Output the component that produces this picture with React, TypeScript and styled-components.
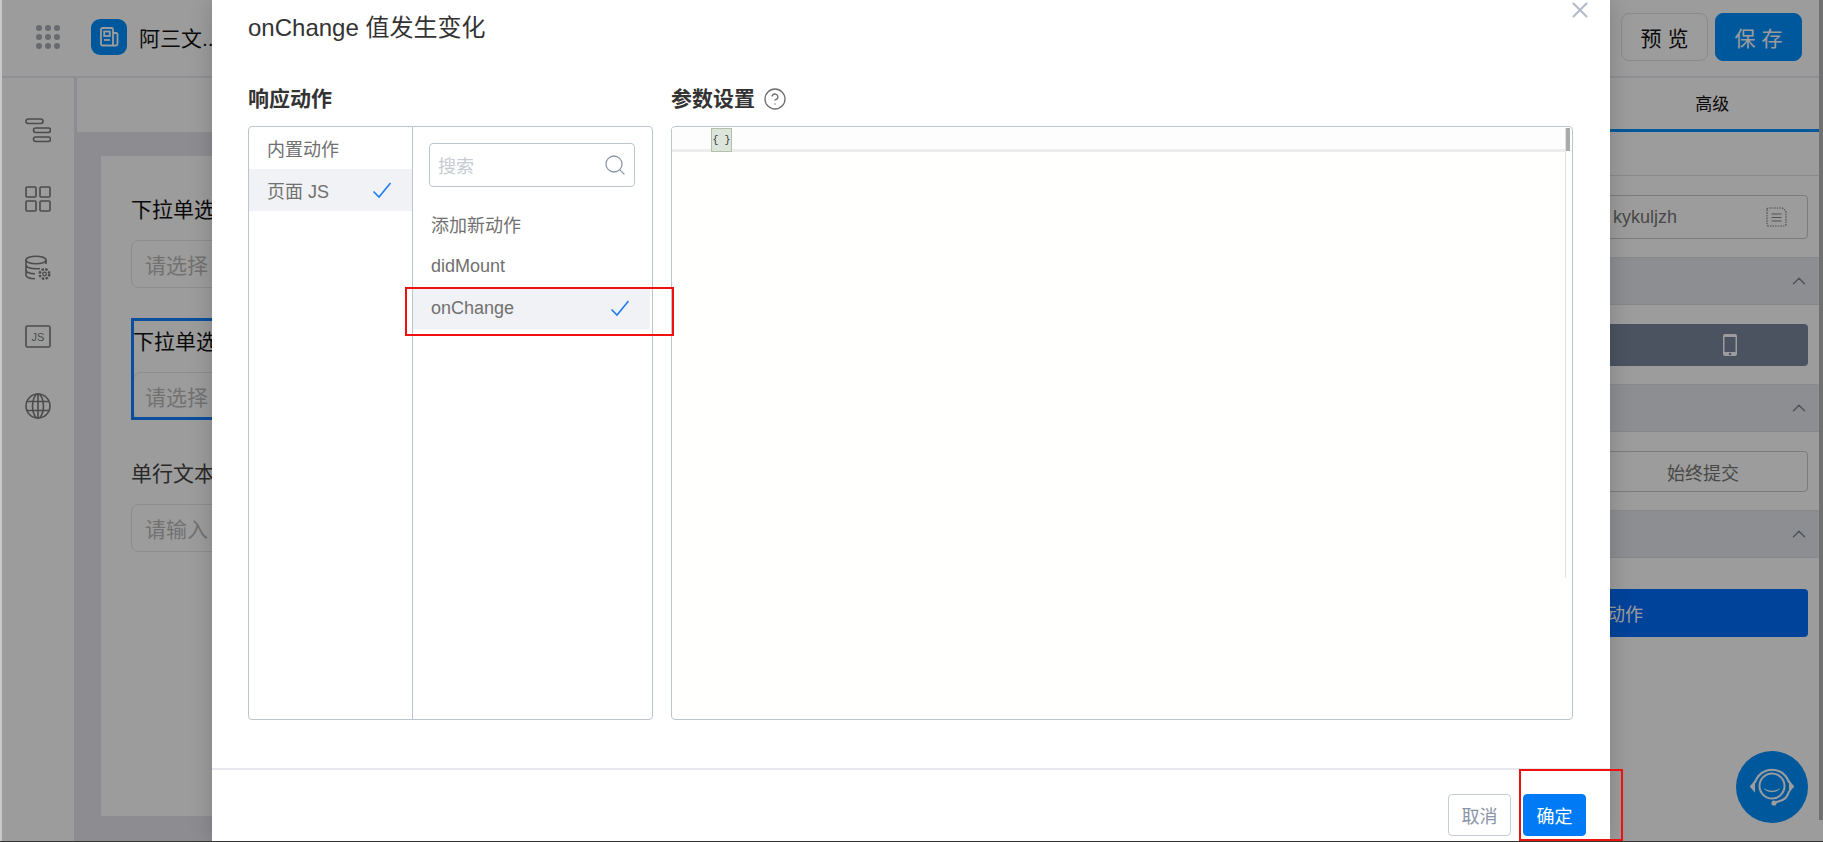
import { FC } from "react";
import styled, { createGlobalStyle } from "styled-components";
import { ChevronUp, Search, X, CircleHelp } from "lucide-react";

const Global = createGlobalStyle`
  html, body {
    margin: 0;
    padding: 0;
    background: #c8c8c8;
    overflow: hidden;
  }
  * { box-sizing: border-box; }
  body {
    font-family: "Liberation Sans", "Noto Sans CJK SC", sans-serif;
    color: #222;
  }
`;

const Screen = styled.div`
  height: 842px;
  padding-left: 2px;
  border-bottom: 1px solid #333;
`;

const Page = styled.div`
  position: relative;
  height: 841px;
  display: flex;
  background: #fff;
  overflow: hidden;
`;

const Shell = styled.div`
  flex: 1;
  min-width: 0;
  display: flex;
  flex-direction: column;
`;

const PageScroll = styled.div`
  width: 4px;
  height: 820px;
  background: #b8b8b8;
`;

const Backdrop = styled.div`
  position: absolute;
  inset: 0;
  background: rgba(0, 0, 0, 0.39);
`;

const TopBar = styled.header`
  height: 78px;
  flex: none;
  display: flex;
  align-items: center;
  padding: 0 17px 3px 34px;
  border-bottom: 2px solid #ebebf2;
`;

const Grip = styled.div`
  display: grid;
  grid-template-columns: repeat(3, 6px);
  gap: 3px;
  margin-right: 31px;
  span {
    width: 6px;
    height: 6px;
    border-radius: 50%;
    background: #a9aeb5;
  }
`;

const Logo = styled.div`
  width: 36px;
  height: 36px;
  border-radius: 9px;
  background: #0090ff;
  display: flex;
  align-items: center;
  justify-content: center;
  margin-right: 12px;
`;

const AppName = styled.div`
  font-size: 21px;
  color: #111;
  white-space: nowrap;
`;

const TopActions = styled.div`
  margin-left: auto;
  display: flex;
  gap: 7px;
`;

const TopButton = styled.button<{ $primary?: boolean }>`
  width: 87px;
  height: 48px;
  border-radius: 8px;
  font: inherit;
  font-size: 21px;
  letter-spacing: 6px;
  padding: 0 0 0 6px;
  color: ${(p) => (p.$primary ? "#fff" : "#111")};
  background: ${(p) => (p.$primary ? "#0090ff" : "#fff")};
  border: 1px solid ${(p) => (p.$primary ? "#0090ff" : "#e2e2e6")};
`;

const Workspace = styled.div`
  flex: 1;
  min-height: 0;
  display: flex;
`;

const Sidebar = styled.nav`
  width: 72px;
  flex: none;
  display: flex;
  flex-direction: column;
  align-items: center;
  gap: 43px;
  padding-top: 39px;
`;

const SideIcon = styled.svg`
  width: 26px;
  height: 26px;
  display: block;
  fill: none;
  stroke: #7c7c7c;
  stroke-width: 1.6;
`;

const Stage = styled.main`
  flex: 1;
  min-width: 0;
  display: flex;
  flex-direction: column;
  background: #e6e7ee;
`;

const SubBar = styled.div`
  height: 54px;
  margin-left: 3px;
  background: #fff;
`;

const CanvasArea = styled.div`
  flex: 1;
  padding: 24px 27px 25px 27px;
`;

const FormCard = styled.div`
  height: 100%;
  background: #fff;
  padding: 42px 30px;
`;

const Field = styled.div<{ $selected?: boolean }>`
  display: flex;
  flex-direction: column;
  gap: 18px;
  ${(p) =>
    p.$selected &&
    `
    outline: 3px solid #1580ff;
    outline-offset: -3px;
    margin: 30px 0 42px;
    padding: 12px 0 0 2px;
    height: 102px;
  `}
`;

const FieldLabel = styled.label<{ $muted?: boolean }>`
  font-size: 21px;
  line-height: 24px;
  white-space: nowrap;
  color: ${(p) => (p.$muted ? "#444" : "#111")};
`;

const FakeInput = styled.div<{ $selected?: boolean }>`
  height: 48px;
  display: flex;
  align-items: center;
  padding-left: ${(p) => (p.$selected ? 11 : 13)}px;
  border: 1px solid #e4e6ea;
  border-radius: 8px;
  font-size: 21px;
  color: #bbb;
`;

const Inspector = styled.aside`
  width: 427px;
  flex: none;
  display: flex;
  flex-direction: column;
`;

const Tabs = styled.div`
  height: 54px;
  flex: none;
  display: grid;
  grid-template-columns: 1fr 1fr;
  border-bottom: 3px solid #0090ff;
`;

const Tab = styled.div`
  display: flex;
  align-items: center;
  justify-content: center;
  padding-bottom: 2px;
  font-size: 17px;
  color: #111;
`;

const Block = styled.div`
  padding: 19px 11px 18px 14px;
  border-bottom: 1px solid #e2e2e6;
`;

const BlankBlock = styled.div`
  height: 44px;
  border-bottom: 1px solid #e2e2e6;
`;

const SectionHead = styled.div`
  height: 47px;
  flex: none;
  display: flex;
  align-items: center;
  justify-content: flex-end;
  padding-right: 9px;
  background: #e7e9ef;
  border-bottom: 1px solid #dcdde3;
  color: #7d8797;
`;

const NameInput = styled.div`
  height: 44px;
  display: flex;
  align-items: center;
  justify-content: flex-end;
  padding-right: 20px;
  gap: 88px;
  border: 1px solid #c5c9d0;
  border-radius: 4px;
  font-size: 18px;
  color: #777;
`;

const DeviceSwitch = styled.div`
  height: 42px;
  display: flex;
  align-items: center;
  justify-content: flex-end;
  padding-right: 71px;
  border-radius: 4px;
  background: #7b889f;
`;

const SubmitSwitch = styled.div`
  height: 41px;
  display: grid;
  grid-template-columns: 192px 1fr;
  align-items: center;
  border: 1px solid #c5c9d0;
  border-radius: 4px;
  font-size: 18px;
  color: #777;
  span:last-child {
    text-align: center;
  }
`;

const ActionWrap = styled.div`
  padding: 31px 11px 0 14px;
`;

const ActionButton = styled.div`
  height: 48px;
  display: flex;
  align-items: center;
  justify-content: flex-end;
  padding-right: 165px;
  border-radius: 4px;
  background: #006efe;
  font-size: 18px;
  color: #fff;
`;

const SupportBubble = styled.div`
  position: absolute;
  left: 1734px;
  top: 751px;
  width: 72px;
  height: 72px;
  border-radius: 50%;
  background: #0090ff;
  display: flex;
  align-items: center;
  justify-content: center;
`;

const Modal = styled.section`
  position: absolute;
  left: 210px;
  top: 0;
  bottom: 0;
  width: 1398px;
  display: flex;
  flex-direction: column;
  background: #fff;
  box-shadow: 0 0 22px rgba(0, 0, 0, 0.18);
`;

const CloseButton = styled.div`
  position: absolute;
  right: 17px;
  top: -3px;
  color: #b5bdcb;
  line-height: 0;
`;

const ModalTitle = styled.h2`
  margin: 0;
  padding: 14px 36px 0;
  height: 85px;
  font-size: 24px;
  line-height: 28px;
  font-weight: 400;
  color: #333;
`;

const ModalBody = styled.div`
  flex: 1;
  min-height: 0;
  display: grid;
  grid-template-columns: 405px 902px;
  gap: 18px;
  padding: 0 37px 0 36px;
`;

const Column = styled.div`
  display: flex;
  flex-direction: column;
  height: 635px;
`;

const ColumnTitle = styled.div`
  height: 41px;
  flex: none;
  display: flex;
  align-items: flex-start;
  gap: 8px;
  font-size: 21px;
  line-height: 28px;
  font-weight: 700;
  color: #333;
  svg {
    margin-top: 2px;
    color: #6e6e6e;
  }
`;

const ActionPanel = styled.div`
  flex: 1;
  display: flex;
  border: 1px solid #bcc4d0;
  border-radius: 4px;
  overflow: hidden;
`;

const TypeList = styled.div`
  width: 164px;
  flex: none;
  border-right: 1px solid #bcc4d0;
`;

const ActionList = styled.div`
  flex: 1;
  min-width: 0;
  padding: 16px 2px 0 0;
`;

const ListItem = styled.div<{ $active?: boolean }>`
  height: 42px;
  display: flex;
  align-items: center;
  justify-content: space-between;
  padding: 0 20px 0 18px;
  font-size: 18px;
  color: #707070;
  background: ${(p) => (p.$active ? "#f1f2f5" : "transparent")};
`;

const CheckMark = styled.svg`
  width: 20px;
  height: 18px;
  fill: none;
  stroke: #1f7cf2;
  stroke-width: 1.6;
`;

const SearchBox = styled.div`
  width: 206px;
  height: 44px;
  margin: 0 0 16px 16px;
  display: flex;
  align-items: center;
  justify-content: space-between;
  padding: 0 7px 0 8px;
  border: 1px solid #bcc4d0;
  border-radius: 4px;
  font-size: 18px;
  color: #c6cad2;
  svg {
    color: #8d99a8;
  }
`;

const EditorPanel = styled.div`
  flex: 1;
  display: flex;
  padding: 1px 2px 0 0;
  border: 1px solid #bcc4d0;
  border-radius: 4px;
  background: #fffffd;
`;

const CodeArea = styled.div`
  flex: 1;
  min-width: 0;
`;

const ActiveLine = styled.div`
  height: 24px;
  padding-left: 39px;
  background: #fdfdfd;
  border-bottom: 3px solid #ececec;
`;

const Bracket = styled.span`
  display: inline-flex;
  align-items: center;
  justify-content: center;
  width: 21px;
  height: 24px;
  background: #dbe5da;
  border: 1px solid #b3c0b0;
  font-family: "Liberation Mono", monospace;
  font-size: 10px;
  white-space: nowrap;
  color: #333;
`;

const ScrollRail = styled.div`
  width: 5px;
  height: 450px;
  border-left: 1px solid #e2e2e2;
  flex: none;
`;

const ScrollThumb = styled.div`
  width: 4px;
  height: 23px;
  background: #aaa;
`;

const ModalFooter = styled.footer`
  height: 73px;
  flex: none;
  display: flex;
  justify-content: flex-end;
  gap: 12px;
  padding: 24px 24px 0 0;
  border-top: 2px solid #e6e8ee;
`;

const FooterButton = styled.button<{ $primary?: boolean }>`
  width: 63px;
  height: 42px;
  padding: 0;
  border-radius: 4px;
  font: inherit;
  font-size: 18px;
  color: ${(p) => (p.$primary ? "#fff" : "#8a94a6")};
  background: ${(p) => (p.$primary ? "#007bf5" : "#fff")};
  border: 1px solid ${(p) => (p.$primary ? "#007bf5" : "#c5ccd8")};
`;

const Callout = styled.div<{ $x: number; $y: number; $w: number; $h: number }>`
  position: absolute;
  left: ${(p) => p.$x}px;
  top: ${(p) => p.$y}px;
  width: ${(p) => p.$w}px;
  height: ${(p) => p.$h}px;
  border: 2px solid #f01010;
  pointer-events: none;
`;

const Tick: FC = () => (
  <CheckMark viewBox="0 0 20 18">
    <path d="M1.5 10.5 L7 16 L18.5 2" />
  </CheckMark>
);

const TreeIcon = () => (
  <SideIcon viewBox="0 0 26 26">
    <rect x="1" y="2" width="17" height="4.5" rx="2.2" />
    <rect x="8.5" y="11" width="17" height="4.5" rx="2.2" />
    <rect x="8.5" y="20" width="17" height="4.5" rx="2.2" />
  </SideIcon>
);

const GridIcon = () => (
  <SideIcon viewBox="0 0 26 26">
    <rect x="1" y="1" width="10" height="10" rx="1" />
    <rect x="15" y="1" width="10" height="10" rx="1" />
    <rect x="1" y="15" width="10" height="10" rx="1" />
    <rect x="15" y="15" width="10" height="10" rx="1" />
  </SideIcon>
);

const DataIcon = () => (
  <SideIcon viewBox="0 0 26 26">
    <ellipse cx="11" cy="5" rx="10" ry="3.8" />
    <path d="M1 5v15c0 2.2 4 3.6 9 3.8M21 5v4M1 10c0 2.2 4.5 3.8 10 3.8 1.5 0 2.8-.1 4-.3M1 15c0 2.2 4 3.6 9 3.8" />
    <circle cx="19.5" cy="19" r="1.8" strokeWidth="1.3" />
    <circle cx="19.5" cy="19" r="4.8" strokeDasharray="2.4 1.4" strokeWidth="2.4" />
  </SideIcon>
);

const JsIcon = () => (
  <SideIcon viewBox="0 0 26 26">
    <rect x="1" y="2" width="24" height="21" rx="1.5" />
    <text x="13" y="17" textAnchor="middle" fontSize="11" fontFamily="Liberation Sans" fill="#7c7c7c" stroke="none">
      JS
    </text>
  </SideIcon>
);

const GlobeIcon = () => (
  <SideIcon viewBox="0 0 26 26">
    <circle cx="13" cy="13" r="12" />
    <ellipse cx="13" cy="13" rx="5.5" ry="12" />
    <path d="M13 1v24M2 8.5h22M2 17.5h22" />
  </SideIcon>
);

const App: FC = () => (
  <Screen>
    <Global />
    <Page>
      <Shell>
        <TopBar>
          <Grip>
            {Array.from({ length: 9 }, (_, i) => (
              <span key={i} />
            ))}
          </Grip>
          <Logo>
            <svg width="22" height="22" viewBox="0 0 22 22" fill="none" stroke="#fff" strokeWidth="1.8">
              <path d="M3 3.5a1.5 1.5 0 0 1 1.5-1.5h9A1.5 1.5 0 0 1 15 3.5V19.5H4.5A1.5 1.5 0 0 1 3 18z" />
              <path d="M15 7h3a1.5 1.5 0 0 1 1.5 1.5V18a1.5 1.5 0 0 1-1.5 1.5h-3" />
              <rect x="6.2" y="5.5" width="5.6" height="4.5" />
              <path d="M6 14h6" />
            </svg>
          </Logo>
          <AppName>阿三文...</AppName>
          <TopActions>
            <TopButton>预览</TopButton>
            <TopButton $primary>保存</TopButton>
          </TopActions>
        </TopBar>
        <Workspace>
          <Sidebar>
            <TreeIcon />
            <GridIcon />
            <DataIcon />
            <JsIcon />
            <GlobeIcon />
          </Sidebar>
          <Stage>
            <SubBar />
            <CanvasArea>
              <FormCard>
                <Field>
                  <FieldLabel>下拉单选</FieldLabel>
                  <FakeInput>请选择</FakeInput>
                </Field>
                <Field $selected>
                  <FieldLabel>下拉单选</FieldLabel>
                  <FakeInput $selected>请选择</FakeInput>
                </Field>
                <Field>
                  <FieldLabel $muted>单行文本</FieldLabel>
                  <FakeInput>请输入</FakeInput>
                </Field>
              </FormCard>
            </CanvasArea>
          </Stage>
          <Inspector>
            <Tabs>
              <Tab />
              <Tab>高级</Tab>
            </Tabs>
            <BlankBlock />
            <Block>
              <NameInput>
                kykuljzh
                <svg width="22" height="22" viewBox="0 0 22 22" fill="none" stroke="#8a8a8a" strokeWidth="1.2">
                  <path d="M2 3.5A1.5 1.5 0 0 1 3.5 2h14L21 5v13.5a1.5 1.5 0 0 1-1.5 1.5h-16A1.5 1.5 0 0 1 2 18.5z" strokeDasharray="1.6 1" />
                  <path d="M6.5 8h10M6.5 11.5h10M6.5 15h10" />
                </svg>
              </NameInput>
            </Block>
            <SectionHead>
              <ChevronUp size={22} strokeWidth={1.6} />
            </SectionHead>
            <Block>
              <DeviceSwitch>
                <svg width="14" height="22" viewBox="0 0 14 22" fill="#fff">
                  <path fillRule="evenodd" d="M2 0h10a2 2 0 0 1 2 2v18a2 2 0 0 1-2 2H2a2 2 0 0 1-2-2V2a2 2 0 0 1 2-2zm-.5 3v15h11V3zM7 18.8a1.2 1.2 0 1 0 0 2.4 1.2 1.2 0 0 0 0-2.4z" />
                </svg>
              </DeviceSwitch>
            </Block>
            <SectionHead>
              <ChevronUp size={22} strokeWidth={1.6} />
            </SectionHead>
            <Block>
              <SubmitSwitch>
                <span />
                <span>始终提交</span>
              </SubmitSwitch>
            </Block>
            <SectionHead>
              <ChevronUp size={22} strokeWidth={1.6} />
            </SectionHead>
            <ActionWrap>
              <ActionButton>动作</ActionButton>
            </ActionWrap>
          </Inspector>
        </Workspace>
      </Shell>
      <PageScroll />
      <SupportBubble>
        <svg width="48" height="48" viewBox="0 0 48 48" fill="none" stroke="#fff" strokeWidth="2">
          <circle cx="24" cy="23" r="12.5" />
          <path d="M7 20a17.5 17.5 0 0 1 34 0" />
          <path d="M6 20 l-3 3.5 3 3.5zM42 20 l3 3.5 -3 3.5z" fill="#fff" />
          <path d="M16 25c4 3.5 12 3.5 16 0-1.5 5.5-14.500 5.500-16 0z" fill="#fff" stroke="none" />
          <path d="M41 28c-1 6-6 10-13 11" />
          <circle cx="26" cy="40" r="2.6" fill="#fff" stroke="none" />
        </svg>
      </SupportBubble>
      <Backdrop />
      <Modal>
        <CloseButton>
          <X size={26} strokeWidth={2} />
        </CloseButton>
        <ModalTitle>onChange 值发生变化</ModalTitle>
        <ModalBody>
          <Column>
            <ColumnTitle>响应动作</ColumnTitle>
            <ActionPanel>
              <TypeList>
                <ListItem>内置动作</ListItem>
                <ListItem $active>
                  页面 JS
                  <Tick />
                </ListItem>
              </TypeList>
              <ActionList>
                <SearchBox>
                  搜索
                  <Search size={24} strokeWidth={1.3} />
                </SearchBox>
                <ListItem>添加新动作</ListItem>
                <ListItem>didMount</ListItem>
                <ListItem $active>
                  onChange
                  <Tick />
                </ListItem>
              </ActionList>
            </ActionPanel>
          </Column>
          <Column>
            <ColumnTitle>
              参数设置
              <CircleHelp size={24} strokeWidth={1.3} />
            </ColumnTitle>
            <EditorPanel>
              <CodeArea>
                <ActiveLine>
                  <Bracket>{"{ }"}</Bracket>
                </ActiveLine>
              </CodeArea>
              <ScrollRail>
                <ScrollThumb />
              </ScrollRail>
            </EditorPanel>
          </Column>
        </ModalBody>
        <ModalFooter>
          <FooterButton>取消</FooterButton>
          <FooterButton $primary>确定</FooterButton>
        </ModalFooter>
      </Modal>
      <Callout $x={403} $y={287} $w={269} $h={49} />
      <Callout $x={1517} $y={769} $w={104} $h={72} />
    </Page>
  </Screen>
);

export default App;
